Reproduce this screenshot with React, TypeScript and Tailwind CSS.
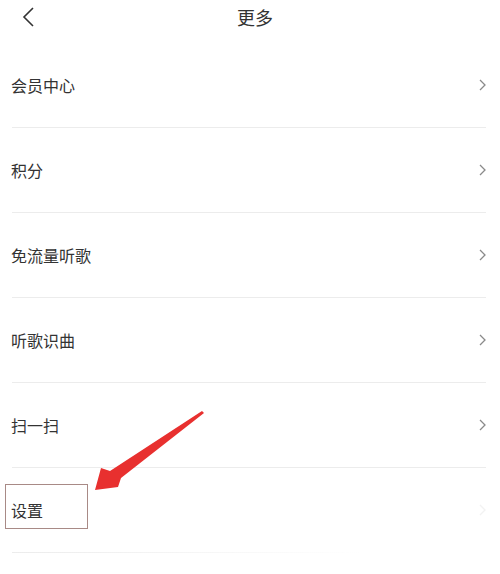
const rows = ['会员中心', '积分', '免流量听歌', '听歌识曲', '扫一扫', '设置'];

function ChevronRight({ faded }: { faded?: boolean }) {
  return (
    <svg width="7" height="12" viewBox="0 0 7 12" className={faded ? 'opacity-10' : ''}>
      <path d="M1 1l5 5-5 5" fill="none" stroke="#8a8a8a" strokeWidth="1.3" />
    </svg>
  );
}

export default function App() {
  return (
    <div
      className="relative w-[500px] h-[574px] overflow-hidden bg-white text-[#333]"
      style={{ fontFamily: '"Noto Sans CJK SC", "Noto Sans", sans-serif' }}
    >
      {/* Header */}
      <div className="relative h-[43px] flex items-center justify-center">
        <svg width="14" height="20" viewBox="0 0 14 20" className="absolute left-[21px] top-[7px]">
          <path d="M12 1L3 10l9 9" fill="none" stroke="#333" strokeWidth="1.6" />
        </svg>
        <span className="text-[18px] -mt-[9px] ml-[10px]">更多</span>
      </div>

      {/* List */}
      <div>
        {rows.map((label, i) => (
          <div key={label} className="h-[85px] pl-[11px] pr-[14px] flex flex-col">
            <div className="flex-1 flex items-center justify-between">
              <span className="text-[16px]">{label}</span>
              <ChevronRight faded={i === rows.length - 1} />
            </div>
            <div
              className={
                i === rows.length - 1
                  ? 'h-px ml-[1px] w-[350px] bg-gradient-to-r from-[#ececec] to-transparent'
                  : 'h-px ml-[1px] bg-[#ececec]'
              }
            />
          </div>
        ))}
      </div>

      {/* Annotation box */}
      <div className="absolute left-[5px] top-[484px] w-[83px] h-[45px] border border-[#a88a86]" />

      {/* Annotation arrow */}
      <svg className="absolute left-0 top-0" width="500" height="574" viewBox="0 0 500 574">
        <polygon
          points="202,411 204,413 121,478 118,487 95,490 101,468 110,471"
          fill="#e8302f"
        />
      </svg>
    </div>
  );
}
